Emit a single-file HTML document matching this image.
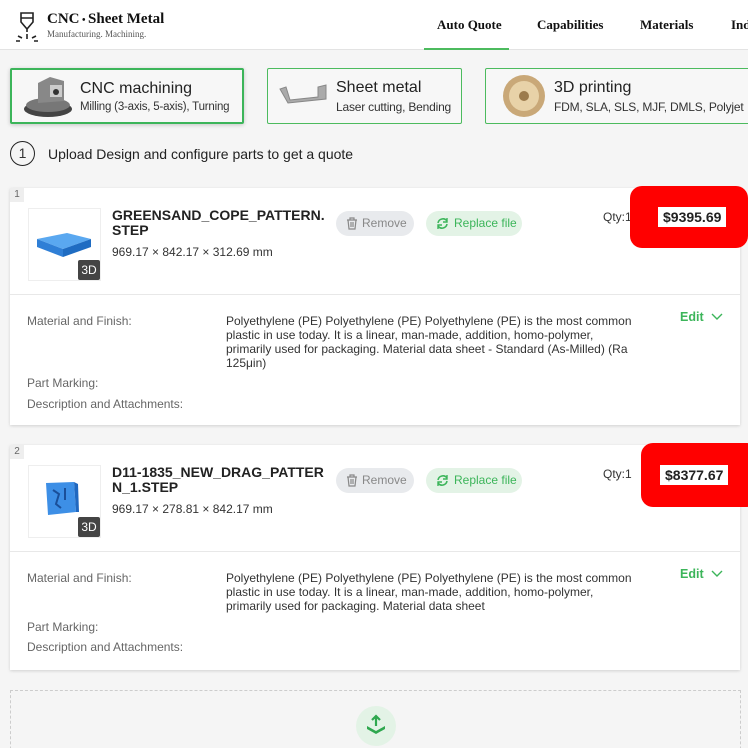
<!DOCTYPE html>
<html><head><meta charset="utf-8"><style>
*{box-sizing:border-box;margin:0;padding:0}
html,body{width:748px;height:748px;overflow:hidden}
body{background:#f5f5f5;font-family:"Liberation Sans",sans-serif;position:relative;color:#333}
.a{position:absolute}
.hdr{left:0;top:0;width:748px;height:50px;background:#fff;border-bottom:1px solid #e3e3e3}
.serif{font-family:"Liberation Serif",serif}
.nav{top:17px;font-size:13px;font-weight:bold;color:#111}
.tab{top:68px;height:56px;background:#f7f7f7;border:1px solid #4cbb5e;border-radius:2px}
.tab .t{position:absolute;left:68px;top:10px;font-size:16px;color:#222;white-space:nowrap}
.tab .s{position:absolute;left:68px;top:31px;font-size:12px;color:#333;white-space:nowrap;letter-spacing:-.2px}
.card{left:10px;width:730px;background:#fff;box-shadow:0 1px 3px rgba(0,0,0,.15)}
.num{left:0;top:0;width:14px;height:14px;background:#eee;font-size:10px;color:#666;text-align:center;line-height:14px}
.thumb{left:18px;top:20px;width:73px;height:73px;border:1px solid #eee;background:#fff}
.b3d{right:0;bottom:0;width:22px;height:20px;background:#444;color:#fff;font-size:12px;text-align:center;line-height:20px;border-radius:2px}
.title{left:102px;top:20px;font-size:14px;font-weight:bold;color:#222;line-height:15px;width:215px}
.dim{left:102px;font-size:12px;color:#333}
.rm{left:326px;top:23px;width:78px;height:25px;border-radius:13px;background:#e8eaed;color:#888;font-size:12px;line-height:25px;padding-left:26px}
.rp{left:416px;top:23px;width:96px;height:25px;border-radius:13px;background:#e3f3e6;color:#3cb55a;font-size:12px;line-height:25px;padding-left:28px}
.qty{left:593px;top:22px;font-size:12px;color:#333}
.red{left:630px;width:118px;height:62px;background:#f00;border-radius:12px}
.price{left:28px;top:21px;padding:2px 5px;background:#fff;font-size:14px;font-weight:bold;color:#222}
.div{left:0;width:730px;height:1px;background:#e8e8e8}
.lbl{left:17px;font-size:12px;color:#666}
.txt{left:216px;width:412px;font-size:12px;line-height:14px;color:#333}
.edit{left:670px;font-size:12.5px;font-weight:bold;color:#3cb55a}
</style></head><body>
<div class="a hdr"></div>
<svg class="a" style="left:14px;top:12px" width="26" height="30" viewBox="0 0 26 30"><path d="M7 1h12v9l-6 7-6-7z M7 6h12 M13 17v3" fill="none" stroke="#222" stroke-width="1.6"/><path d="M4 24l4 2M13 22v5M22 24l-4 2M2 29h4M20 29h4" stroke="#222" stroke-width="1.6"/></svg>
<div class="a serif" style="left:47px;top:11px;font-size:15px;font-weight:bold;color:#111">CNC<span style="font-size:10px"> • </span>Sheet Metal</div>
<div class="a serif" style="left:47px;top:29px;font-size:9px;color:#555">Manufacturing. Machining.</div>
<div class="a nav serif" style="left:437px">Auto Quote</div>
<div class="a" style="left:424px;top:48px;width:85px;height:2px;background:#4cbb5e"></div>
<div class="a nav serif" style="left:537px">Capabilities</div>
<div class="a nav serif" style="left:640px">Materials</div>
<div class="a nav serif" style="left:731px">Ind</div>

<div class="a tab" style="left:10px;width:234px;border:2px solid #3cb55a;box-shadow:0 1px 4px rgba(0,0,0,.2)">
<svg class="a" style="left:8px;top:3px" width="56" height="46"><ellipse cx="28" cy="36" rx="24" ry="8" fill="#444"/><ellipse cx="28" cy="32" rx="22" ry="7" fill="#777"/><path d="M18 30V10l12-6 14 4v20z" fill="#888"/><rect x="30" y="12" width="12" height="12" fill="#ccc"/><circle cx="36" cy="19" r="3" fill="#333"/></svg>
<div class="t">CNC machining</div><div class="s" style="font-size:11.5px">Milling (3-axis, 5-axis), Turning</div></div>
<div class="a tab" style="left:267px;width:195px">
<svg class="a" style="left:10px;top:12px" width="52" height="30"><path d="M2 8l8 14 38-4V4l-8 2v10L12 19 8 6z" fill="#aaa" stroke="#888"/></svg>
<div class="t">Sheet metal</div><div class="s">Laser cutting, Bending</div></div>
<div class="a tab" style="left:485px;width:270px">
<svg class="a" style="left:14px;top:2px" width="48" height="50"><circle cx="24" cy="25" r="21" fill="#c9a878"/><circle cx="24" cy="25" r="15" fill="#e8d2a8"/><circle cx="24" cy="25" r="5" fill="#9c7b4c"/></svg>
<div class="t">3D printing</div><div class="s">FDM, SLA, SLS, MJF, DMLS, Polyjet</div></div>

<div class="a" style="left:10px;top:141px;width:25px;height:25px;border:1.5px solid #222;border-radius:50%;text-align:center;line-height:22px;font-size:14px">1</div>
<div class="a" style="left:48px;top:146px;font-size:14px;color:#222">Upload Design and configure parts to get a quote</div>

<div class="a card" style="top:188px;height:237px">
<div class="a num">1</div>
<div class="a thumb"><svg width="73" height="73"><path d="M8 30l30-6 24 6-28 10z" fill="#5aa8f0"/><path d="M8 30v8l26 10V40z" fill="#2f7fd6"/><path d="M34 40v8l28-10v-8z" fill="#1f6cc2"/></svg><div class="a b3d">3D</div></div>
<div class="a title">GREENSAND_COPE_PATTERN.<br>STEP</div>
<div class="a dim" style="top:57px">969.17 × 842.17 × 312.69 mm</div>
<div class="a rm"><svg class="a" style="left:10px;top:6px" width="12" height="13"><path d="M1 3h10M4 3V1h4v2M2 3l1 9h6l1-9M5 5v5M7 5v5" fill="none" stroke="#888" stroke-width="1.2"/></svg>Remove</div>
<div class="a rp"><svg class="a" style="left:10px;top:6px" width="13" height="13"><path d="M2 6a5 5 0 0 1 9-2M11 7a5 5 0 0 1-9 2" fill="none" stroke="#3cb55a" stroke-width="1.6"/><path d="M11 1v4H7M2 12V8h4" fill="none" stroke="#3cb55a" stroke-width="1.4"/></svg>Replace file</div>
<div class="a qty">Qty:1</div>
<div class="a div" style="top:106px"></div>
<div class="a lbl" style="top:126px">Material and Finish:</div>
<div class="a txt" style="top:126px">Polyethylene (PE) Polyethylene (PE) Polyethylene (PE) is the most common plastic in use today. It is a linear, man-made, addition, homo-polymer, primarily used for packaging. Material data sheet - Standard (As-Milled) (Ra 125μin)</div>
<div class="a edit" style="top:122px">Edit <svg width="12" height="8" style="margin-left:4px"><path d="M1 1l5 5 5-5" fill="none" stroke="#3cb55a" stroke-width="1.4"/></svg></div>
<div class="a lbl" style="top:188px">Part Marking:</div>
<div class="a lbl" style="top:209px">Description and Attachments:</div>
</div>
<div class="a red" style="top:186px"><div class="a price">$9395.69</div></div>

<div class="a card" style="top:445px;height:225px">
<div class="a num">2</div>
<div class="a thumb"><svg width="73" height="73"><path d="M17 17l28-1 2 30-28 3z" fill="#3d8fe6"/><path d="M45 16l4 2 1 28-3 0z" fill="#2068c0"/><path d="M24 24l6 4-3 10 5 4M36 22v12" stroke="#1a4f99" stroke-width="2" fill="none"/></svg><div class="a b3d">3D</div></div>
<div class="a title">D11-1835_NEW_DRAG_PATTER<br>N_1.STEP</div>
<div class="a dim" style="top:57px">969.17 × 278.81 × 842.17 mm</div>
<div class="a rm"><svg class="a" style="left:10px;top:6px" width="12" height="13"><path d="M1 3h10M4 3V1h4v2M2 3l1 9h6l1-9M5 5v5M7 5v5" fill="none" stroke="#888" stroke-width="1.2"/></svg>Remove</div>
<div class="a rp"><svg class="a" style="left:10px;top:6px" width="13" height="13"><path d="M2 6a5 5 0 0 1 9-2M11 7a5 5 0 0 1-9 2" fill="none" stroke="#3cb55a" stroke-width="1.6"/><path d="M11 1v4H7M2 12V8h4" fill="none" stroke="#3cb55a" stroke-width="1.4"/></svg>Replace file</div>
<div class="a qty">Qty:1</div>
<div class="a div" style="top:106px"></div>
<div class="a lbl" style="top:126px">Material and Finish:</div>
<div class="a txt" style="top:126px">Polyethylene (PE) Polyethylene (PE) Polyethylene (PE) is the most common plastic in use today. It is a linear, man-made, addition, homo-polymer, primarily used for packaging. Material data sheet</div>
<div class="a edit" style="top:122px">Edit <svg width="12" height="8" style="margin-left:4px"><path d="M1 1l5 5 5-5" fill="none" stroke="#3cb55a" stroke-width="1.4"/></svg></div>
<div class="a lbl" style="top:175px">Part Marking:</div>
<div class="a lbl" style="top:195px">Description and Attachments:</div>
</div>
<div class="a red" style="top:443px;left:641px;height:64px"><div class="a price" style="top:22px;left:19px">$8377.67</div></div>

<div class="a" style="left:10px;top:690px;width:731px;height:80px;border:1px dashed #ccc"></div>
<div class="a" style="left:356px;top:706px;width:40px;height:40px;border-radius:50%;background:#e3f3e6"></div>
<svg class="a" style="left:365px;top:714px" width="22" height="22"><path d="M11 2v10M7 6l4-4 4 4" fill="none" stroke="#2fa84f" stroke-width="2.2"/><path d="M2 12l9 5 9-5v3l-9 5-9-5z" fill="#2fa84f"/></svg>
</body></html>
